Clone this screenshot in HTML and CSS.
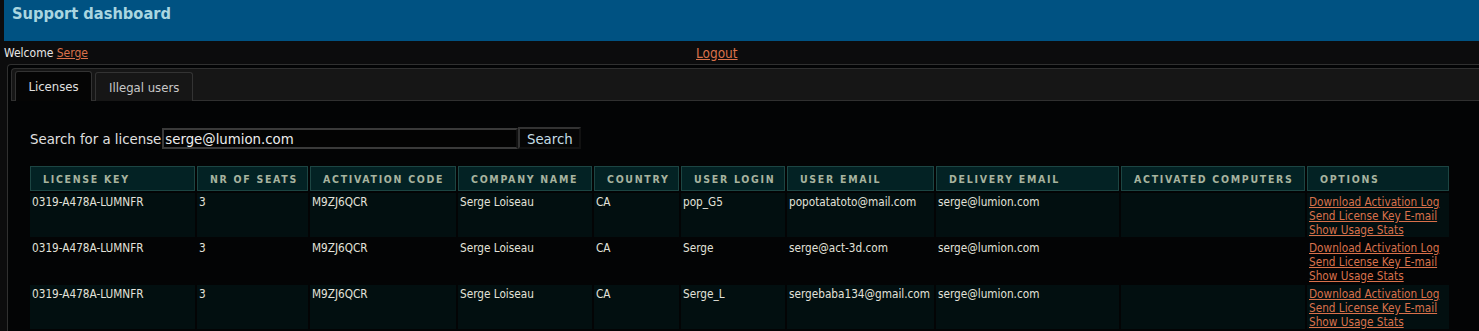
FILE: index.html
```html
<!DOCTYPE html>
<html>
<head>
<meta charset="utf-8">
<link rel="stylesheet" href="styles.css">
</head>
<body>
<header class="top">
  <h1 class="title">Support dashboard</h1>
</header>
<div class="userbar">
  <div class="welcome">Welcome <a href="#">Serge</a></div>
  <a class="logout" href="#">Logout</a>
</div>
<div class="tabs">
  <ul class="tabnav">
    <li class="tab active">Licenses</li>
    <li class="tab">Illegal users</li>
  </ul>
  <div class="panel">
    <form class="search">
      <label class="search-label">Search for a license</label>
      <input class="search-input" type="text" value="serge@lumion.com">
      <button class="search-btn" type="button">Search</button>
    </form>
    <table class="grid">
      <colgroup>
        <col style="width:165px"><col style="width:111px"><col style="width:146px"><col style="width:134px"><col style="width:85px"><col style="width:104px"><col style="width:147px"><col style="width:183px"><col style="width:184px"><col style="width:142px">
      </colgroup>
      <thead>
        <tr>
          <th>License key</th><th>Nr of seats</th><th>Activation code</th><th>Company name</th><th>Country</th><th>User login</th><th>User email</th><th>Delivery email</th><th>Activated computers</th><th>Options</th>
        </tr>
      </thead>
      <tbody>
        <tr class="odd">
          <td>0319-A478A-LUMNFR</td><td>3</td><td>M9ZJ6QCR</td><td>Serge Loiseau</td><td>CA</td><td>pop_G5</td><td>popotatatoto@mail.com</td><td>serge@lumion.com</td><td></td>
          <td class="opts"><a href="#">Download Activation Log</a><a href="#">Send License Key E-mail</a><a href="#">Show Usage Stats</a></td>
        </tr>
        <tr class="even">
          <td>0319-A478A-LUMNFR</td><td>3</td><td>M9ZJ6QCR</td><td>Serge Loiseau</td><td>CA</td><td>Serge</td><td>serge@act-3d.com</td><td>serge@lumion.com</td><td></td>
          <td class="opts"><a href="#">Download Activation Log</a><a href="#">Send License Key E-mail</a><a href="#">Show Usage Stats</a></td>
        </tr>
        <tr class="odd">
          <td>0319-A478A-LUMNFR</td><td>3</td><td>M9ZJ6QCR</td><td>Serge Loiseau</td><td>CA</td><td>Serge_L</td><td>sergebaba134@gmail.com</td><td>serge@lumion.com</td><td></td>
          <td class="opts"><a href="#">Download Activation Log</a><a href="#">Send License Key E-mail</a><a href="#">Show Usage Stats</a></td>
        </tr>
      </tbody>
    </table>
  </div>
</div>
</body>
</html>
```
FILE: styles.css
```css
* { box-sizing: border-box; }
html, body { margin: 0; padding: 0; }
body {
  background: #0c0c0d;
  color: #d8d8d8;
  font-family: "DejaVu Sans Condensed", "DejaVu Sans", sans-serif;
  font-size: 12px;
  overflow: hidden;
  height: 331px;
}
a { color: #d9714b; }
.top {
  margin-left: 4px;
  height: 41px;
  background: #005282;
  padding: 4px 0 0 8px;
}
.title {
  margin: 0;
  font-size: 16.3px;
  font-weight: bold;
  color: #a9d6e0;
  line-height: 20px;
}
.userbar {
  height: 23px;
  display: flex;
  align-items: center;
  padding-left: 4px;
}
.welcome { width: 692px; flex: none; color: #e6e6e6; }
.logout { flex: none; font-size: 13.5px; }
.tabs {
  margin-left: 7px;
  border: 1px solid #303030;
  border-right: none;
  border-bottom: none;
  border-radius: 4px 0 0 0;
  background: #030405;
  padding: 3px 0 0 0;
}
.tabnav {
  list-style: none;
  margin: 0 0 0 3px;
  padding: 3px 0 0 3px;
  height: 33px;
  background: #161616;
  border: 1px solid #303030;
  border-right: none;
  border-radius: 4px 0 0 0;
  display: flex;
  gap: 3px;
  align-items: flex-end;
}
.tab {
  height: 29px;
  margin-bottom: -1px;
  border: 1px solid #333;
  border-bottom: none;
  border-radius: 3px 3px 0 0;
  background: #161616;
  color: #c8c8c8;
  font-size: 13px;
  display: flex;
  align-items: center;
  padding: 0 13px;
}
.tab.active {
  background: #050505;
  color: #e0e0e0;
  height: 30px;
  width: 77px;
  justify-content: center;
  padding: 0;
}
.panel { padding: 26px 0 0 22px; }
.search {
  display: flex;
  align-items: center;
  height: 22px;
  margin: 0;
}
.search-label { color: #e0e0e0; font-size: 14.8px; }
.search-input {
  margin-left: 1px;
  width: 356px;
  height: 21px;
  background: #030303;
  color: #eeeeee;
  border: 2px solid #3a3a3a;
  border-right-color: #111;
  border-bottom-color: #3a3a3a;
  font-family: "DejaVu Sans Condensed", sans-serif;
  font-size: 14.8px;
  padding: 0 0 0 1px;
  outline: none;
}
.search-btn {
  width: 63px;
  height: 22px;
  background: #050505;
  color: #c4dde6;
  border: 2px solid #333;
  border-right-color: #111;
  border-bottom-color: #111;
  font-family: "DejaVu Sans Condensed", sans-serif;
  font-size: 14.8px;
  padding: 0;
}
.grid {
  margin-top: 15px;
  margin-left: -2px;
  border-collapse: separate;
  border-spacing: 2px;
  table-layout: fixed;
  width: 1423px;
}
.grid th {
  height: 25px;
  background: #032224;
  border: 1px solid #1c4543;
  color: #a7b39f;
  font-size: 10.5px;
  font-weight: bold;
  letter-spacing: 1.7px;
  text-transform: uppercase;
  text-align: left;
  padding: 0 0 0 12px;
  white-space: nowrap;
  overflow: hidden;
}
.grid td {
  height: 44px;
  vertical-align: top;
  padding: 2px 2px 0 2px;
  font-size: 11.7px;
  line-height: 14px;
  color: #e2e2da;
  white-space: nowrap;
  overflow: hidden;
}
.grid tr.odd td { background: #020f10; }
.grid tr.even td { background: #030405; }
.opts a {
  display: block;
  font-size: 11.7px;
  line-height: 14px;
  color: #d9714b;
}
```
